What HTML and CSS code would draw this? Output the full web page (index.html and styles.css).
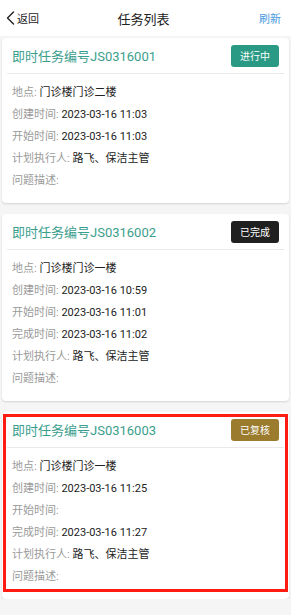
FILE: index.html
```html
<!DOCTYPE html>
<html lang="zh-CN">
<head>
<meta charset="utf-8">
<title>任务列表</title>
<link rel="stylesheet" href="styles.css">
</head>
<body>
<header class="nav">
  <div class="back">
    <svg class="chev" width="9" height="14" viewBox="0 0 9 14"><path d="M7.5 1 L1.5 7 L7.5 13" fill="none" stroke="#222" stroke-width="1.4" stroke-linecap="round" stroke-linejoin="round"/></svg>
    <span>返回</span>
  </div>
  <div class="title">任务列表</div>
  <div class="refresh">刷新</div>
</header>
<main class="list">
  <section class="card">
    <div class="card-head">
      <div class="card-title">即时任务编号JS0316001</div>
      <div class="badge green">进行中</div>
    </div>
    <div class="card-body">
      <div class="row"><span class="lbl">地点:</span> <span class="val">门诊楼门诊二楼</span></div>
      <div class="row"><span class="lbl">创建时间:</span> <span class="val">2023-03-16 11:03</span></div>
      <div class="row"><span class="lbl">开始时间:</span> <span class="val">2023-03-16 11:03</span></div>
      <div class="row"><span class="lbl">计划执行人:</span> <span class="val">路飞、保洁主管</span></div>
      <div class="row"><span class="lbl">问题描述:</span></div>
    </div>
  </section>
  <section class="card">
    <div class="card-head">
      <div class="card-title">即时任务编号JS0316002</div>
      <div class="badge black">已完成</div>
    </div>
    <div class="card-body">
      <div class="row"><span class="lbl">地点:</span> <span class="val">门诊楼门诊一楼</span></div>
      <div class="row"><span class="lbl">创建时间:</span> <span class="val">2023-03-16 10:59</span></div>
      <div class="row"><span class="lbl">开始时间:</span> <span class="val">2023-03-16 11:01</span></div>
      <div class="row"><span class="lbl">完成时间:</span> <span class="val">2023-03-16 11:02</span></div>
      <div class="row"><span class="lbl">计划执行人:</span> <span class="val">路飞、保洁主管</span></div>
      <div class="row"><span class="lbl">问题描述:</span></div>
    </div>
  </section>
  <section class="card marked">
    <div class="card-head">
      <div class="card-title">即时任务编号JS0316003</div>
      <div class="badge gold">已复核</div>
    </div>
    <div class="card-body">
      <div class="row"><span class="lbl">地点:</span> <span class="val">门诊楼门诊一楼</span></div>
      <div class="row"><span class="lbl">创建时间:</span> <span class="val">2023-03-16 11:25</span></div>
      <div class="row"><span class="lbl">开始时间:</span></div>
      <div class="row"><span class="lbl">完成时间:</span> <span class="val">2023-03-16 11:27</span></div>
      <div class="row"><span class="lbl">计划执行人:</span> <span class="val">路飞、保洁主管</span></div>
      <div class="row"><span class="lbl">问题描述:</span></div>
    </div>
    <div class="highlight"></div>
  </section>
</main>
</body>
</html>
```
FILE: styles.css
```css
* { box-sizing: border-box; }
html, body { margin: 0; padding: 0; }
body {
  background: #f5f5f5;
  font-family: Roboto, "Noto Sans CJK SC", sans-serif;
  color: #333;
  width: 291px;
}
.nav {
  height: 36px;
  background: #fff;
  display: grid;
  grid-template-columns: 1fr auto 1fr;
  align-items: center;
  padding: 0 10px 0 6px;
}
.back {
  display: flex;
  align-items: center;
  gap: 2px;
  font-size: 11px;
  color: #222;
}
.chev { display: block; }
.title {
  font-size: 13px;
  color: #222;
}
.refresh {
  justify-self: end;
  font-size: 11px;
  color: #4a9be0;
}
.list {
  padding: 2px 2px 0;
  display: flex;
  flex-direction: column;
  gap: 11px;
}
.card {
  position: relative;
  background: #fff;
  border-radius: 4px;
  box-shadow: 0 1px 2px rgba(0,0,0,0.14);
}
.card-head {
  height: 36px;
  display: flex;
  align-items: center;
  justify-content: space-between;
  border-bottom: 1px solid #e9e9e9;
  margin: 0 5px;
  padding: 0 5px;
}
.card-title {
  font-size: 13px;
  color: #3a9e8d;
}
.badge {
  width: 48px;
  height: 22px;
  border-radius: 3px;
  color: #fff;
  font-size: 10px;
  display: flex;
  align-items: center;
  justify-content: center;
}
.green { background: #2a9a84; }
.black { background: #202020; }
.gold { background: #9b7b2e; }
.card-body {
  padding: 8px 10px 11px;
}
.row {
  height: 22px;
  line-height: 22px;
  font-size: 11px;
  white-space: nowrap;
}
.lbl { color: #9a9a9a; }
.val { color: #222; }
.highlight {
  position: absolute;
  top: 2px;
  left: 1px;
  right: 1px;
  bottom: 7px;
  border: 3px solid #ff1a12;
  pointer-events: none;
}
```
